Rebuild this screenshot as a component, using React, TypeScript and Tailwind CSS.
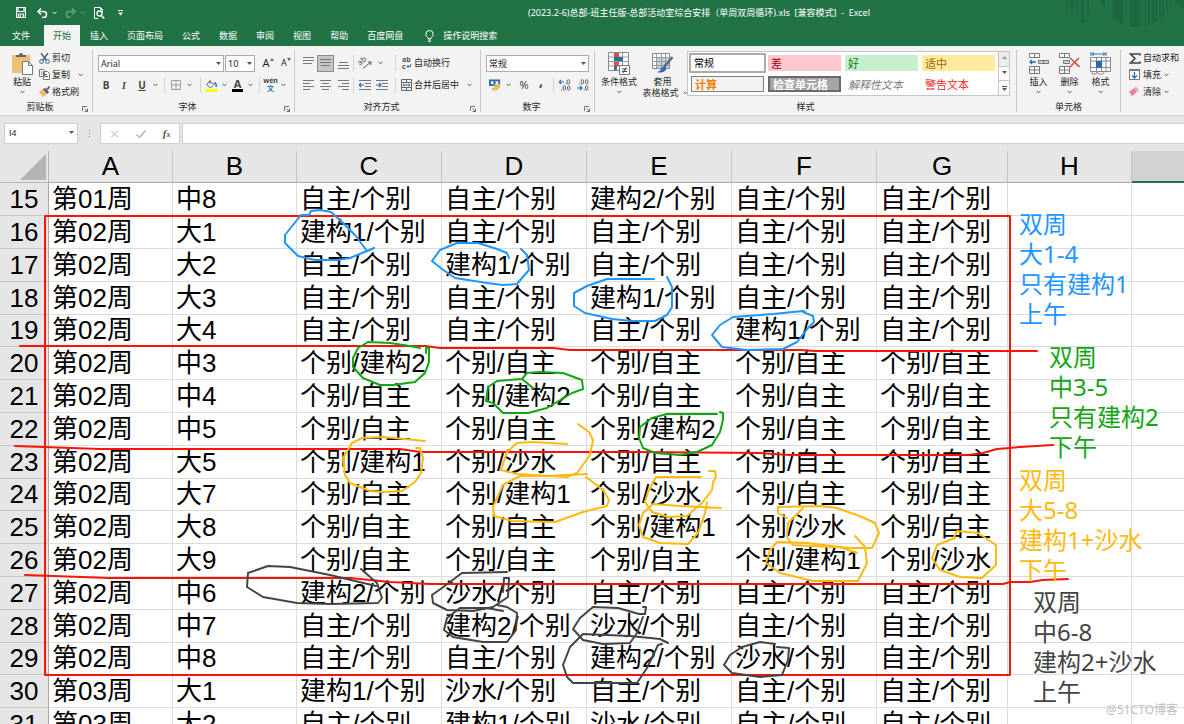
import { useState } from "react";
import type { ReactNode } from "react";

const tabs = ["文件", "开始", "插入", "页面布局", "公式", "数据", "审阅", "视图", "帮助", "百度网盘"];

const S = "自主/个别";
const P = "个别/自主";
const B1 = "建构1/个别";
const B2 = "建构2/个别";
const W = "沙水/个别";
const PB1 = "个别/建构1";
const PB2 = "个别/建构2";
const PW = "个别/沙水";

const rows: string[][] = [
  ["第01周", "中8", S, S, B2, S, S],
  ["第02周", "大1", B1, S, S, S, S],
  ["第02周", "大2", S, B1, S, S, S],
  ["第02周", "大3", S, S, B1, S, S],
  ["第02周", "大4", S, S, S, B1, S],
  ["第02周", "中3", PB2, P, P, P, P],
  ["第02周", "中4", P, PB2, P, P, P],
  ["第02周", "中5", P, P, PB2, P, P],
  ["第02周", "大5", PB1, PW, P, P, P],
  ["第02周", "大7", P, PB1, PW, P, P],
  ["第02周", "大8", P, P, PB1, PW, P],
  ["第02周", "大9", P, P, P, PB1, PW],
  ["第02周", "中6", B2, W, S, S, S],
  ["第02周", "中7", S, B2, W, S, S],
  ["第02周", "中8", S, S, B2, W, S],
  ["第03周", "大1", B1, W, S, S, S],
  ["第03周", "大2", S, B1, W, S, S],
];

const columns = ["A", "B", "C", "D", "E", "F", "G", "H"];

// pen strokes drawn over the sheet, grouped by pen colour
const ink: { color: string; strokes: string[] }[] = [
  {
    color: "#1e96ff",
    strokes: [
      "374,248 367,251 350,258 337,260 315,260 298,256 285,243 285,235 297,220 301,215 309,215 311,211 320,210 331,212 342,222 355,235 367,251",
      "509,258 507,253 497,249 478,243 457,243 440,250 432,261 442,269 455,278 487,283 503,285 517,284 522,278 529,270 527,255 521,249",
      "654,279 607,279 587,286 574,293 574,306 585,313 612,319 632,321 655,321 667,315 672,307 672,287 667,277",
      "805,312 803,311 773,314 733,317 720,325 712,335 722,347 747,350 783,349 797,342 808,328 814,322 813,316 803,312",
    ],
  },
  {
    color: "#12a612",
    strokes: [
      "426,353 426,348 429,348 429,362 425,373 415,382 393,385 380,385 363,378 353,367 353,358 358,348 368,342 390,343 410,346 420,348",
      "533,388 522,379 527,373 540,372 563,373 582,380 583,389 572,393 547,408 528,413 503,413 493,403 486,401 488,387 497,381 522,379",
      "717,414 667,414 652,418 640,427 639,438 643,448 655,453 680,455 697,452 712,445 720,432 723,420 723,413 720,412",
    ],
  },
  {
    color: "#ffb90f",
    strokes: [
      "425,441 383,437 362,438 352,443 343,458 345,475 350,483 370,491 383,492 402,491 415,482 421,473 423,458 420,448 416,448",
      "567,444 533,442 517,443 507,452 501,470 517,474 567,477 577,473 590,455 593,440 589,432 578,424",
      "587,474 547,476 520,476 503,485 493,507 494,516 512,521 555,522 583,512 607,506 609,500 603,490 586,477",
      "701,477 656,477 648,492 645,502 652,512 668,517 687,516 702,503 712,490 713,482 716,477 715,471 709,471",
      "721,508 680,506 653,504 643,513 639,525 643,537 660,543 688,544 698,533 705,513 707,502",
      "787,518 778,513 778,507 820,506 837,508 862,517 875,523 879,533 872,548 853,548 793,545 787,537 788,523 804,507",
      "857,553 840,547 807,543 777,542 770,550 766,563 780,573 813,581 858,581 867,563 865,547 855,536",
      "954,537 957,531 978,533 996,545 996,565 982,578 960,577 940,570 932,558 937,545 955,538",
    ],
  },
  {
    color: "#444444",
    strokes: [
      "376,586 330,575 290,567 268,566 248,573 247,587 263,597 297,603 330,604 378,603 382,598 377,583 361,569",
      "507,572 462,573 442,588 432,595 433,603 447,610 473,611 493,607 508,597 509,578 504,578 503,592",
      "503,611 487,608 460,608 447,618 444,630 453,637 483,642 507,642 516,630 517,613 507,607 497,605",
      "643,607 646,607 645,614 639,614 618,608 593,607 580,618 573,629 583,640 603,644 630,643 637,633 643,617",
      "668,643 660,639 630,636 583,634 570,647 563,665 567,677 573,683 637,683 647,668 658,645 662,644",
      "775,644 760,642 742,647 730,655 724,665 732,673 760,677 782,675 788,660 789,648 777,647",
    ],
  },
];

const redLines = [
  "20,346 425,346 440,348 553,348 570,350 800,350 815,351 1037,351",
  "15,446 100,449 400,449 420,452 640,452 760,453 790,455 968,455 983,453 997,449 1020,447 1053,445",
  "25,575 110,578 350,578 390,582 430,584 1003,584 1010,582 1030,582 1043,580 1068,579",
];

const styleCells = [
  { name: "常规", cls: "bg-white text-black text-[10px] outline-2 outline-[#ababab]" },
  { name: "差", cls: "bg-[#ffc7ce] text-[#9c0006] text-[11px]" },
  { name: "好", cls: "bg-[#c6efce] text-[#1a7a1a] text-[11px]" },
  { name: "适中", cls: "bg-[#ffeb9c] text-[#9c6500] text-[11px]" },
  { name: "计算", cls: "bg-[#f2f2f2] text-[#fa7d00] text-[11px] font-bold border border-[#7f7f7f]" },
  { name: "检查单元格", cls: "bg-[#a5a5a5] text-white text-[11px] font-bold border-2 border-[#6a6a6a]" },
  { name: "解释性文本", cls: "bg-white text-[#7f7f7f] text-[11px] italic" },
  { name: "警告文本", cls: "bg-white text-[#ff2020] text-[11px]" },
];

function Chevron({ className = "" }: { className?: string }) {
  return (
    <svg width="5" height="4" viewBox="0 0 5 4" className={`shrink-0 ${className}`} fill="none" stroke="#555">
      <path d="M.5.8 2.5 2.8 4.5.8" />
    </svg>
  );
}

function Sep() {
  return <span className="h-4 w-px shrink-0 bg-[#d4d4d4]" />;
}

function Group({ label, width, launcher, children }: { label: string; width: string; launcher?: boolean; children: ReactNode }) {
  return (
    <section className={`relative flex shrink-0 flex-col border-r border-[#c8c8c8] ${width}`}>
      <div className="h-[52px]">{children}</div>
      <h2 className={launcher ? "pr-3 text-center leading-[10px]" : "text-center leading-[10px]"}>{label}</h2>
      {launcher && (
        <button type="button" aria-label={`${label}设置`} className="absolute right-1 bottom-0">
          <svg width="6" height="6" viewBox="0 0 6 6" fill="none" stroke="#666">
            <path d="M.5 5V.5H5M2.5 2.5 5.5 5.5M5.5 2.5V5.5H2.5" strokeWidth=".9" />
          </svg>
        </button>
      )}
    </section>
  );
}

function IconButton({ label, className = "w-[18px]", children }: { label: string; className?: string; children?: ReactNode }) {
  return (
    <button type="button" aria-label={label} className={`flex h-4 shrink-0 items-center justify-center ${className}`}>
      {children}
    </button>
  );
}

function Combo({ label, value, className }: { label: string; value: string; className: string }) {
  return (
    <span className={`relative block shrink-0 ${className}`}>
      <select aria-label={label} className="block h-[17px] w-full appearance-none border border-[#ababab] bg-white pl-[2px] leading-[15px]">
        <option>{value}</option>
      </select>
      <svg width="5" height="3" viewBox="0 0 5 3" className="pointer-events-none absolute top-[7px] right-[3px]">
        <path d="M0 0h5L2.5 3z" fill="#555" />
      </svg>
    </span>
  );
}

function Lines({ widths, align = "left", offset = 0 }: { widths: number[]; align?: string; offset?: number }) {
  return (
    <svg width="11" height="14" viewBox="0 0 11 14" stroke="#777">
      {widths.map((w, i) => {
        const x = align === "left" ? 0 : align === "center" ? (11 - w) / 2 : 11 - w;
        const y = offset + 0.5 + i * 3;
        return <path key={i} d={`M${x} ${y}h${w}`} />;
      })}
    </svg>
  );
}

function Indent({ right }: { right?: boolean }) {
  return (
    <svg width="12" height="11" viewBox="0 0 12 11" fill="none">
      <path d="M0 .5h12M6 3.5h6M6 6.5h6M0 9.5h12" stroke="#777" />
      <path d={right ? "M0 5h5M3 3l2 2-2 2" : "M5 5H0M2 3 0 5l2 2"} stroke="#2b6cb0" strokeWidth="1.2" />
    </svg>
  );
}

function Decimals({ right }: { right?: boolean }) {
  return (
    <svg width="12" height="12" viewBox="0 0 12 12" fill="none">
      <path d={right ? "M0 9h5M3 7l2 2-2 2" : "M5 3H0M2 1 0 3l2 2"} stroke="#2b6cb0" strokeWidth="1.2" />
      <g stroke="#555" strokeWidth=".9">
        {right ? (
          <>
            <ellipse cx="5.4" cy="2.8" rx="1.3" ry="2.2" />
            <ellipse cx="9.7" cy="2.8" rx="1.3" ry="2.2" />
            <ellipse cx="9.7" cy="9" rx="1.3" ry="2.2" />
            <path d="M2 4.9h1M6.7 11h1" />
          </>
        ) : (
          <>
            <ellipse cx="9.3" cy="2.8" rx="1.3" ry="2.2" />
            <ellipse cx="5.3" cy="9" rx="1.3" ry="2.2" />
            <ellipse cx="9.7" cy="9" rx="1.3" ry="2.2" />
            <path d="M6.5 4.9h1M2 11h1" />
          </>
        )}
      </g>
    </svg>
  );
}

function BigButton({ label, icon, className }: { label: ReactNode; icon: ReactNode; className: string }) {
  return (
    <button type="button" className={`flex shrink-0 flex-col items-center leading-[11px] whitespace-nowrap ${className}`}>
      <span className="flex h-[26px] items-center justify-center">{icon}</span>
      {label}
    </button>
  );
}

function TitleBar() {
  return (
    <header className="relative shrink-0 bg-[#217346] text-white">
      <svg className="absolute top-0 right-0" width="120" height="28" viewBox="0 0 120 28" fill="#1e6640">
        <path d="M2 0h2v12H2zM7 0h2v17H7zM12 0h2v12h-2zM17 0h3v23h-3zM23 0h2v14h-2zM36 0h5v9zM49 0h10v24l-10-5zM66 0h10v27H66zM81 0h2v26h-2zM84 0h2v25h-2zM88 0h2v24h-2zM91 0h2v22h-2zM95 0h2v20h-2zM98 0h2v17h-2zM102 0h2v13h-2zM106 0h1v9h-1zM110 0h10v8q-6-2-10-8z" />
      </svg>
      <div className="relative flex h-[25px] items-center">
        <div className="flex items-center pl-4">
          <button type="button" aria-label="保存">
            <svg width="10" height="11" viewBox="0 0 10 11" fill="none" stroke="#fff">
              <path d="M.5.5h9v10h-9zM2 .5v4h6v-4M2.5 10.5V7h5v3.5M4.5 8v2" strokeWidth="1.2" />
            </svg>
          </button>
          <button type="button" aria-label="撤消" className="ml-[11px] flex items-center gap-1">
            <svg width="11" height="10" viewBox="0 0 11 10" fill="none" stroke="#fff" strokeWidth="1.5">
              <path d="M4 .5 1 3.5 4 6.5M1 3.5h5.5a3 3 0 0 1 0 6H5" />
            </svg>
            <svg width="5" height="4" viewBox="0 0 5 4" fill="none" stroke="#fff"><path d="M.5.8 2.5 2.8 4.5.8" /></svg>
          </button>
          <button type="button" aria-label="恢复" className="ml-2 flex items-center gap-1 opacity-30">
            <svg width="11" height="10" viewBox="0 0 11 10" fill="none" stroke="#fff" strokeWidth="1.5">
              <path d="M7 .5l3 3-3 3M10 3.5H4.5a3 3 0 0 0 0 6H6" />
            </svg>
            <svg width="5" height="4" viewBox="0 0 5 4" fill="none" stroke="#fff"><path d="M.5.8 2.5 2.8 4.5.8" /></svg>
          </button>
          <button type="button" aria-label="打印预览" className="ml-[9px]">
            <svg width="11" height="12" viewBox="0 0 11 12" fill="none" stroke="#fff">
              <path d="M4 11.5H.5V.5h6l2 2V5M6.5.5v2h2" />
              <circle cx="5.5" cy="6.5" r="2.5" strokeWidth="1.3" />
              <path d="M7.3 8.5l3 3" strokeWidth="1.6" />
            </svg>
          </button>
          <button type="button" aria-label="自定义快速访问工具栏" className="ml-[13px]">
            <svg width="5" height="6" viewBox="0 0 5 6" fill="#fff"><path d="M0 0h5v1H0zM0 2.5h5L2.5 5.5z" /></svg>
          </button>
        </div>
        <h1 className="absolute inset-x-0 pl-[214px] text-center whitespace-pre">
          (2023.2-6)总部-班主任版-总部活动室综合安排（单周双周循环).xls  [兼容模式]  -  Excel
        </h1>
      </div>
      <nav className="relative flex h-[21px] items-end gap-px pl-[3px]">
        {tabs.map((t) => (
          <button
            key={t}
            type="button"
            className={
              t === "开始"
                ? "ml-1 h-[21px] bg-[#f3f3f3] px-[9px] text-[#217346]"
                : "h-[21px] px-[9px]"
            }
          >
            {t}
          </button>
        ))}
        <button type="button" className="ml-3 flex h-[21px] items-center gap-[9px]">
          <svg width="9" height="12" viewBox="0 0 9 12" fill="none" stroke="#fff">
            <path d="M3 8.5C3 7 .8 6.5.8 4.2a3.7 3.7 0 0 1 7.4 0C8.2 6.5 6 7 6 8.5zM3 10h3M3.5 11.5h2" />
          </svg>
          操作说明搜索
        </button>
      </nav>
    </header>
  );
}

function ClipboardGroup() {
  return (
    <Group label="剪贴板" width="w-[93px]" launcher>
      <div className="flex pl-3">
        <BigButton
          className="w-5"
          label={<><span>粘贴</span><Chevron className="mt-[3px]" /></>}
          icon={
            <svg width="21" height="23" viewBox="0 0 21 23">
              <path d="M0 3h18v18H0z" fill="#ecc279" />
              <path d="M4 5V3h3a2 2 0 0 1 4 0h3v2z" fill="#666" />
              <path d="M10.5 9.5h6l4 4v9h-10z" fill="#fff" stroke="#777" />
              <path d="M16.5 9.5v4h4" fill="none" stroke="#777" />
            </svg>
          }
        />
        <div className="ml-[7px] flex flex-col">
          <button type="button" className="flex h-4 items-center gap-[2px] whitespace-nowrap">
            <svg width="11" height="11" viewBox="0 0 11 11" fill="none">
              <path d="M2 0l5.5 7.5M9 0 3.5 7.5" stroke="#555" strokeWidth="1.3" />
              <circle cx="2.5" cy="8.5" r="1.9" stroke="#2b6cb0" />
              <circle cx="8.5" cy="8.5" r="1.9" stroke="#2b6cb0" />
            </svg>
            剪切
          </button>
          <button type="button" className="flex h-[17px] items-center gap-[2px] whitespace-nowrap">
            <svg width="11" height="11" viewBox="0 0 11 11" fill="#fff" stroke="#777">
              <path d="M.5.5h4l1 1v6h-5zM4.5 2.5h4l2 2v6h-6z" />
              <path d="M2 3h1.5M2 5h1.5M6 5.5h2M6 7.5h3" stroke="#2b6cb0" />
            </svg>
            复制
            <Chevron className="ml-[6px]" />
          </button>
          <button type="button" className="flex h-[17px] items-center gap-[2px] whitespace-nowrap">
            <svg width="11" height="11" viewBox="0 0 11 11">
              <path d="M0 6l4-3 4 5-4 3z" fill="#ecb96a" />
              <path d="M4 3l2-1 4 4-2 2zM7 3l3-3 1 1-2 3z" fill="#555" />
            </svg>
            格式刷
          </button>
        </div>
      </div>
    </Group>
  );
}

function FontGroup() {
  return (
    <Group label="字体" width="w-[202px]" launcher>
      <div className="flex h-6 items-center pt-[2px] pl-[5px]">
        <Combo label="字体" value="Arial" className="w-[126px]" />
        <Combo label="字号" value="10" className="ml-px w-[30px]" />
        <IconButton label="增大字号" className="ml-1 w-[18px]">
          <span className="text-[11px]">A</span>
          <svg width="4" height="3" viewBox="0 0 4 3" className="mb-2"><path d="M0 3 2 0l2 3z" fill="#2b6cb0" /></svg>
        </IconButton>
        <IconButton label="减小字号">
          <span>A</span>
          <svg width="4" height="3" viewBox="0 0 4 3" className="mb-2"><path d="M0 0h4L2 3z" fill="#2b6cb0" /></svg>
        </IconButton>
      </div>
      <div className="flex h-[22px] items-center pl-1 text-[#444]">
        <IconButton label="加粗"><b className="text-[10px]">B</b></IconButton>
        <IconButton label="倾斜"><i className="font-['Liberation_Serif',serif] text-[10px] font-bold">I</i></IconButton>
        <IconButton label="下划线"><u className="text-[10px] font-bold">U</u></IconButton>
        <IconButton label="下划线选项" className="w-[9px]"><Chevron /></IconButton>
        <span className="mx-1 flex"><Sep /></span>
        <IconButton label="边框" className="w-[13px]">
          <svg width="10" height="10" viewBox="0 0 10 10" fill="none" stroke="#999"><path d="M.5.5h9v9h-9zM5 .5v9M.5 5h9" /></svg>
        </IconButton>
        <IconButton label="边框选项" className="w-[14px]"><Chevron /></IconButton>
        <span className="mx-1 flex"><Sep /></span>
        <IconButton label="填充颜色" className="w-[13px]">
          <svg width="13" height="13" viewBox="0 0 13 13" fill="none">
            <path d="M5 1v4M5 2 1.5 5.5l4 3.5L9 5.5z" stroke="#666" />
            <path d="M9 4q3 0 2 4" stroke="#2b6cb0" strokeWidth="1.5" />
            <path d="M0 10h12v3H0z" fill="#ff0" />
          </svg>
        </IconButton>
        <IconButton label="填充颜色选项" className="w-[13px]"><Chevron /></IconButton>
        <IconButton label="字体颜色" className="w-[13px]">
          <span className="border-b-3 border-black px-[2px] text-[11px] leading-[10px] font-bold">A</span>
        </IconButton>
        <IconButton label="字体颜色选项" className="w-3"><Chevron /></IconButton>
        <span className="mr-1 ml-[3px] flex"><Sep /></span>
        <IconButton label="拼音" className="w-[13px]">
          <span className="flex flex-col text-[7px] leading-[8px] font-bold">wén<span className="text-[#2b6cb0]">文</span></span>
        </IconButton>
        <IconButton label="拼音选项" className="w-3"><Chevron /></IconButton>
      </div>
    </Group>
  );
}

function AlignGroup() {
  return (
    <Group label="对齐方式" width="w-[186px]" launcher>
      <div className="flex h-6 items-center pt-[2px]">
        <IconButton label="顶端对齐" className="ml-[5px] w-[17px]"><Lines widths={[11, 11, 9]} offset={1} /></IconButton>
        <button type="button" aria-label="垂直居中" className="flex h-[17px] w-[17px] items-center justify-center border border-[#8a8a8a] bg-[#c5c5c5]">
          <Lines widths={[11, 11, 9]} align="center" offset={3} />
        </button>
        <IconButton label="底端对齐" className="w-[19px]"><Lines widths={[9, 11, 11]} offset={6} align="center" /></IconButton>
        <Sep />
        <IconButton label="方向" className="w-[22px]">
          <svg width="13" height="12" viewBox="0 0 13 12" fill="none" stroke="#555" className="overflow-visible">
            <text x="1" y="9" transform="rotate(-40 1 9)" fontSize="8" fill="#555" stroke="none">ab</text>
            <path d="M4 11.5 12 5M9 5h3v3" />
          </svg>
        </IconButton>
        <IconButton label="方向选项" className="w-2"><Chevron /></IconButton>
        <span className="mr-[6px] ml-[11px] flex"><Sep /></span>
        <button type="button" className="flex items-center gap-[3px] whitespace-nowrap">
          <svg width="9" height="12" viewBox="0 0 9 12" fill="#555" className="overflow-visible">
            <text x="0" y="5" fontSize="7" fontWeight="bold">ab</text>
            <text x="0" y="12" fontSize="7" fontWeight="bold">c</text>
            <path d="M8.5 7v2.5H5M6.5 8 5 9.5 6.5 11" fill="none" stroke="#2b6cb0" />
          </svg>
          自动换行
        </button>
      </div>
      <div className="flex h-[22px] items-center">
        <IconButton label="左对齐" className="ml-[5px] w-[17px]"><Lines widths={[11, 7, 11, 7]} offset={2} /></IconButton>
        <IconButton label="居中" className="w-[17px]"><Lines widths={[11, 7, 11, 7]} align="center" offset={2} /></IconButton>
        <IconButton label="右对齐" className="w-[19px]"><Lines widths={[11, 7, 11, 7]} align="right" offset={2} /></IconButton>
        <Sep />
        <IconButton label="减少缩进量" className="w-[22px]"><Indent /></IconButton>
        <IconButton label="增加缩进量" className="w-3"><Indent right /></IconButton>
        <span className="mr-[5px] ml-[7px] flex"><Sep /></span>
        <button type="button" className="flex items-center gap-[2px] whitespace-nowrap">
          <svg width="11" height="12" viewBox="0 0 11 12" fill="none" stroke="#666">
            <path d="M.5.5h10v11H.5zM.5 3.5h10M.5 8.5h10M5.5.5v3M5.5 8.5v3" />
            <path d="M2 6h7M3.5 4.8 2 6l1.5 1.2M7.5 4.8 9 6 7.5 7.2" stroke="#2b6cb0" />
          </svg>
          合并后居中
          <Chevron className="ml-[6px]" />
        </button>
      </div>
    </Group>
  );
}

function NumberGroup() {
  return (
    <Group label="数字" width="w-[114px]" launcher>
      <div className="flex h-6 items-center pt-[2px] pl-[5px]">
        <Combo label="数字格式" value="常规" className="w-[103px]" />
      </div>
      <div className="flex h-[22px] items-center pl-2 text-[#444]">
        <IconButton label="会计数字格式" className="w-3">
          <svg width="13" height="12" viewBox="0 0 13 12">
            <path d="M0 0h12v7H0z" fill="#2b6cb0" />
            <path d="M2 2h8v3H2z" fill="#fff" />
            <circle cx="6" cy="3.5" r="1.5" fill="#2b6cb0" />
            <path d="M6 5h6v4l-4 3H3V9h3z" fill="#ecb96a" />
          </svg>
        </IconButton>
        <IconButton label="会计数字格式选项" className="w-[15px]"><Chevron /></IconButton>
        <IconButton label="百分比样式" className="w-4"><span className="text-[11px]">%</span></IconButton>
        <IconButton label="千位分隔样式" className="w-[18px]"><b className="mb-2 text-[14px] leading-3">,</b></IconButton>
        <span className="mr-[5px] ml-[3px] flex"><Sep /></span>
        <IconButton label="增加小数位数" className="w-3"><Decimals /></IconButton>
        <IconButton label="减少小数位数" className="w-6"><Decimals right /></IconButton>
      </div>
    </Group>
  );
}

function StylesGroup() {
  return (
    <Group label="样式" width="w-[422px]">
      <div className="flex items-start pl-1">
        <BigButton
          className="w-10"
          label={<><span>条件格式</span><Chevron className="mt-[3px]" /></>}
          icon={
            <svg width="22" height="23" viewBox="0 0 22 23" fill="none">
              <path d="M.5.5h20v18H.5z" fill="#fff" stroke="#888" />
              <path d="M.5 5h20M.5 9.5h20M.5 14h20M6.5.5v18M14.5.5v18" stroke="#999" />
              <path d="M6 1h5v4H6zM6 10h5v4H6z" fill="#d8542f" />
              <path d="M6 5h9v4H6zM6 14h3v4H6z" fill="#2b6cb0" />
              <path d="M11.5 13.5h10v9h-10z" fill="#fff" stroke="#777" />
              <path d="M14 17h5M14 19.5h5M18 15.5l-3 5.5" stroke="#444" />
            </svg>
          }
        />
        <BigButton
          className="w-[47px]"
          label={<><span>套用</span><span className="flex items-center gap-1 pl-[5px]">表格格式<Chevron /></span></>}
          icon={
            <svg width="22" height="23" viewBox="0 0 22 23" fill="none">
              <path d="M.5 1.5h17v15H.5z" fill="#fff" stroke="#888" />
              <path d="M5 6h12v10H5z" fill="#bcd3ea" />
              <path d="M.5 5.5h17M.5 9.5h17M.5 13.5h17M4.5 1.5v15M9.5 1.5v15M13.5 1.5v15" stroke="#999" />
              <path d="M20.5 5 12 15" stroke="#666" strokeWidth="2.5" />
              <path d="M13 14q3 4-2 6-4 1-6 0 4-1 4-4z" fill="#2b6cb0" />
            </svg>
          }
        />
        <div className="mt-px ml-px flex border border-[#c6c6c6] bg-white">
          <div className="grid grid-cols-[repeat(4,73px)] grid-rows-[16px_16px] gap-x-1 gap-y-[5px] p-[3px]">
            {styleCells.map((c) => (
              <button key={c.name} type="button" className={`flex items-center pl-[3px] leading-none whitespace-nowrap ${c.cls}`}>
                {c.name}
              </button>
            ))}
          </div>
          <div className="flex w-[11px] flex-col border-l border-[#c6c6c6]">
            {["M0 3 2.5 0 5 3z", "M0 0h5L2.5 3z", "M0 0h5v1H0zM0 2h5L2.5 5z"].map((d, i) => (
              <button
                key={d}
                type="button"
                aria-label={["上一行", "下一行", "其他"][i]}
                className={i === 0 ? "flex flex-1 items-center justify-center bg-[#e1e1e1] opacity-60" : "flex flex-1 items-center justify-center border-t border-[#c6c6c6]"}
              >
                <svg width="5" height="5" viewBox="0 0 5 5"><path d={d} fill="#555" /></svg>
              </button>
            ))}
          </div>
        </div>
      </div>
    </Group>
  );
}

function CellsGroup() {
  return (
    <Group label="单元格" width="w-[104px]">
      <div className="flex pl-[6px]">
        <BigButton
          className="w-[31px]"
          label={<>插入<Chevron className="mt-[3px]" /></>}
          icon={
            <svg width="20" height="21" viewBox="0 0 20 21" fill="#fff" stroke="#777">
              <path d="M.5.5h10v4H.5zM5.5.5v4M.5 13.5h10v7H.5zM5.5 13.5v7M.5 17h10" />
              <path d="M9.5 7.5h10v3h-10zM14.5 7.5v3" fill="#bcd3ea" />
              <path d="M7 9H1M3 7 1 9l2 2" stroke="#2b6cb0" strokeWidth="1.3" fill="none" />
            </svg>
          }
        />
        <BigButton
          className="w-[31px]"
          label={<>删除<Chevron className="mt-[3px]" /></>}
          icon={
            <svg width="21" height="21" viewBox="0 0 21 21" fill="#fff" stroke="#777">
              <path d="M.5.5h10v4H.5zM5.5.5v4M.5 13.5h10v7H.5zM5.5 13.5v7M.5 17h10" />
              <path d="M4.5 7.5h6v3h-6z" fill="#bcd3ea" />
              <path d="M11 5l9.5 9M20 5l-9 9" stroke="#d8542f" strokeWidth="1.6" />
            </svg>
          }
        />
        <BigButton
          className="w-[31px]"
          label={<>格式<Chevron className="mt-[3px]" /></>}
          icon={
            <svg width="21" height="23" viewBox="0 0 21 23" fill="#fff" stroke="#888">
              <path d="M.5 5.5h20v14H.5zM.5 9h20M.5 15.5h20M6.5 5.5v14M11.5 5.5v14M16 5.5v14M2 20v2h4l1-2 2 2h4l1-2" />
              <path d="M6 9h6v7H6z" fill="#2b6cb0" stroke="none" />
              <path d="M1 0v4M16 0v4M2 2h13M4 .5 2 2l2 1.5M13 .5 15 2l-2 1.5" stroke="#2b6cb0" fill="none" />
            </svg>
          }
        />
      </div>
    </Group>
  );
}

function EditingGroup() {
  return (
    <section className="flex shrink-0 flex-col pl-2">
      <button type="button" className="flex h-4 items-center gap-[2px] whitespace-nowrap">
        <svg width="12" height="11" viewBox="0 0 12 11" fill="none" stroke="#444" strokeWidth="1.6">
          <path d="M11 2.5V1H1.5L6 5.5 1.5 10H11V8.5" />
        </svg>
        自动求和
      </button>
      <button type="button" className="flex h-[17px] items-center gap-[3px]">
        <svg width="11" height="11" viewBox="0 0 11 11" fill="#fff" stroke="#777">
          <path d="M.5.5h10v10H.5z" />
          <path d="M.5 1h10" strokeWidth="2" />
          <path d="M5.5 3v6M3 6.5 5.5 9 8 6.5" stroke="#2b6cb0" strokeWidth="1.3" fill="none" />
        </svg>
        填充
        <Chevron />
      </button>
      <button type="button" className="flex h-[17px] items-center gap-[3px]">
        <svg width="11" height="11" viewBox="0 0 11 11">
          <path d="M0 6l5-4 3 4-5 4z" fill="#e8829a" />
          <path d="M5 2l2-1.500L10 4 8 6z" fill="#f0a3b5" />
        </svg>
        清除
        <Chevron />
      </button>
    </section>
  );
}

function FormulaBar() {
  const [formula, setFormula] = useState("");
  return (
    <div className="flex h-[36px] shrink-0 items-center border-t border-[#d0d0d0] bg-[#e6e6e6] pl-1">
      <Combo label="名称框" value="I4" className="w-[74px] font-['Liberation_Sans',sans-serif] [&>select]:h-[21px] [&>select]:border-[#d0d0d0] [&>select]:pl-1 [&>svg]:top-2 [&>svg]:right-1" />
      <span className="flex w-[22px] flex-col items-center gap-[2px]">
        <i className="size-px bg-[#777]" />
        <i className="size-px bg-[#777]" />
        <i className="size-px bg-[#777]" />
      </span>
      <div className="flex h-[21px] w-[80px] items-center justify-around border border-[#d0d0d0] bg-white">
        <button type="button" aria-label="取消">
          <svg width="9" height="8" viewBox="0 0 9 8" stroke="#b0b0b0"><path d="M1 .5l7 7M8 .5l-7 7" /></svg>
        </button>
        <button type="button" aria-label="输入">
          <svg width="10" height="8" viewBox="0 0 10 8" stroke="#b0b0b0" fill="none"><path d="M.5 4.5 3.5 7.5 9.5.5" strokeWidth="1.3" /></svg>
        </button>
        <button type="button" aria-label="插入函数" className="font-['Liberation_Serif',serif] text-[11px] font-bold text-[#555] italic">
          f<span className="text-[8px]">x</span>
        </button>
      </div>
      <input
        aria-label="编辑栏"
        value={formula}
        onChange={(e) => setFormula(e.target.value)}
        className="ml-[2px] h-[21px] min-w-0 flex-1 border border-r-0 border-[#d0d0d0] bg-white px-1 outline-none"
      />
    </div>
  );
}

function Note({ lines, className }: { lines: string[]; className: string }) {
  return (
    <p className={`absolute text-[24px] leading-[30px] whitespace-nowrap ${className}`}>
      {lines.map((l) => (
        <span key={l} className="block">{l}</span>
      ))}
    </p>
  );
}

function Sheet() {
  return (
    <main className="relative min-h-0 flex-1 overflow-hidden bg-white">
      <table className="w-full table-fixed border-separate border-spacing-0 font-['Liberation_Sans','Noto_Sans_CJK_SC',sans-serif] text-[26px] text-black">
        <colgroup>
          <col className="w-[49px]" />
          <col className="w-[124px]" />
          <col className="w-[124px]" />
          <col className="w-[145px]" />
          <col className="w-[145px]" />
          <col className="w-[145px]" />
          <col className="w-[145px]" />
          <col className="w-[131px]" />
          <col className="w-[124px]" />
          <col />
        </colgroup>
        <thead>
          <tr className="h-8 bg-[#e6e6e6] leading-[31px]">
            <th className="border-r border-b border-[#b5b5b5] p-0">
              <svg width="26" height="26" viewBox="0 0 26 26" className="mr-[2px] ml-auto"><path d="M26 0v26H0z" fill="#b4b4b4" /></svg>
            </th>
            {columns.map((c) => (
              <th key={c} scope="col" className="border-r border-b border-r-[#c4c4c4] border-b-[#a8a8a8] p-0 font-normal">{c}</th>
            ))}
            <th className="border-b-2 border-[#217346] bg-[#d2d2d2] p-0" />
          </tr>
        </thead>
        <tbody>
          {rows.map((row, i) => (
            <tr key={i} className={i % 5 === 4 ? "h-8 leading-[31px]" : "h-[33px] leading-8"}>
              <th scope="row" className="border-r border-b border-r-[#a8a8a8] border-b-[#c8c8c8] bg-[#e6e6e6] p-0 font-normal">{i + 15}</th>
              {row.map((v, j) => (
                <td key={j} className="border-r border-b border-[#dcdcdc] py-0 pr-0 pl-[3px] whitespace-nowrap">{v}</td>
              ))}
              <td className="border-r border-b border-[#dcdcdc] p-0" />
              <td className="border-b border-[#dcdcdc] p-0" />
            </tr>
          ))}
        </tbody>
      </table>

      <svg className="pointer-events-none absolute top-0 left-0" width="1184" height="573" viewBox="0 151 1184 573" fill="none" strokeLinejoin="round" strokeLinecap="round" strokeWidth="2">
        <rect x="45" y="216" width="965" height="459" stroke="#fa1408" />
        {redLines.map((p) => <polyline key={p} points={p} stroke="#fa1408" />)}
        {ink.map((pen) => pen.strokes.map((p) => <polyline key={p} points={p} stroke={pen.color} />))}
      </svg>

      <Note className="top-[58px] left-[1019px] text-[#1e96ff]" lines={["双周", "大1-4", "只有建构1", "上午"]} />
      <Note className="top-[191px] left-[1049px] text-[#12a612]" lines={["双周", "中3-5", "只有建构2", "下午"]} />
      <Note className="top-[314px] left-[1019px] text-[#ffb90f]" lines={["双周", "大5-8", "建构1+沙水", "下午"]} />
      <Note className="top-[436px] left-[1033px] text-[#444]" lines={["双周", "中6-8", "建构2+沙水", "上午"]} />
      <small className="absolute right-[6px] bottom-[6px] text-[12px] leading-4 text-[#bdbdbd]">@51CTO博客</small>
    </main>
  );
}

export default function App() {
  return (
    <div className="flex h-screen flex-col overflow-hidden bg-[#e6e6e6] font-['Noto_Sans','Noto_Sans_CJK_SC',sans-serif] text-[9px] text-[#262626]">
      <TitleBar />
      <div className="flex h-[69px] shrink-0 overflow-hidden bg-[#f3f3f3] pt-1 pb-[3px]">
        <ClipboardGroup />
        <FontGroup />
        <AlignGroup />
        <NumberGroup />
        <StylesGroup />
        <CellsGroup />
        <EditingGroup />
      </div>
      <FormulaBar />
      <Sheet />
    </div>
  );
}
